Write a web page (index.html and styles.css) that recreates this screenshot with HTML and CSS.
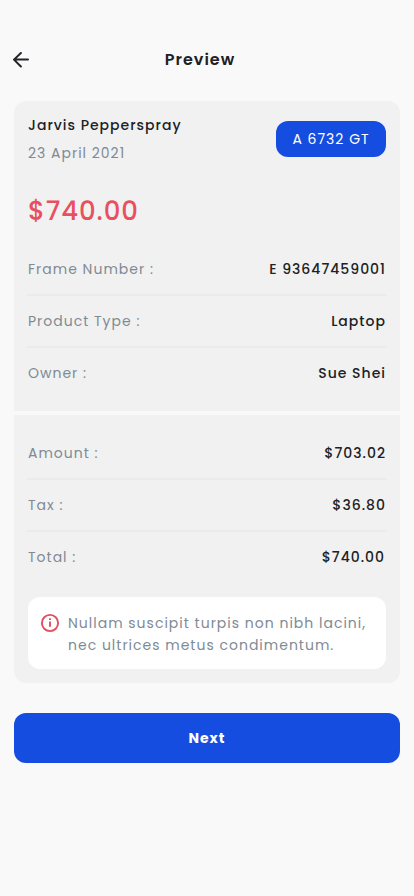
FILE: index.html
```html
<!DOCTYPE html>
<html lang="en">
<head>
<meta charset="utf-8">
<title>Preview</title>
<link rel="stylesheet" href="styles.css">
</head>
<body>
<main class="screen">
  <header class="topbar">
    <svg class="back" width="18" height="16" viewBox="0 0 18 16" fill="none" stroke="#232427" stroke-width="2" stroke-linecap="round" stroke-linejoin="round"><path d="M16 7.5H2.2M8.9 1 2 7.6 8.9 14.5"/></svg>
    <h1 class="title">Preview</h1>
  </header>
  <section class="card card-top">
    <div class="person">
      <div>
        <div class="name">Jarvis Pepperspray</div>
        <div class="date">23 April 2021</div>
      </div>
      <div class="plate">A 6732 GT</div>
    </div>
    <div class="price">$740.00</div>
    <dl class="rows">
      <div class="row"><dt>Frame Number :</dt><dd>E 93647459001</dd></div>
      <div class="row"><dt>Product Type :</dt><dd>Laptop</dd></div>
      <div class="row"><dt>Owner :</dt><dd>Sue Shei</dd></div>
    </dl>
  </section>
  <section class="card card-bottom">
    <dl class="rows">
      <div class="row"><dt>Amount :</dt><dd>$703.02</dd></div>
      <div class="row"><dt>Tax :</dt><dd>$36.80</dd></div>
      <div class="row"><dt>Total :</dt><dd class="total">$740.00</dd></div>
    </dl>
    <div class="note">
      <svg class="info" width="20" height="20" viewBox="0 0 20 20" fill="none" stroke="#e04f5f" stroke-width="1.9"><circle cx="10" cy="10" r="8.1"/><path d="M10 5.3v1.8M10 8.6v5.2"/></svg>
      <p class="note-text">Nullam suscipit turpis non nibh lacini,<br>nec ultrices metus condimentum.</p>
    </div>
  </section>
  <button class="next">Next</button>
</main>
</body>
</html>
```
FILE: styles.css
```css
* { box-sizing: border-box; margin: 0; }
body { background: #f9f9f9; color: #202124; font: 14px/22px Poppins, Lato, "Open Sans", sans-serif; letter-spacing: 1px; }
.screen { height: 896px; padding: 44px 14px 0; overflow: hidden; }
.topbar { height: 32px; display: grid; grid-template-columns: 18px 1fr 32px; align-items: center; margin: 0 -2px 25px; }
.title { font-size: 16px; font-weight: 600; line-height: 24px; text-align: center; }
.card { background: #f1f1f1; padding: 0 14px; }
.card-top { height: 310px; border-radius: 12px 12px 0 0; padding-top: 13px; }
.card-bottom { height: 268px; margin-top: 4px; border-radius: 0 0 12px 12px; padding-top: 13px; }
.person { display: flex; justify-content: space-between; }
.name { font-weight: 500; }
.date { margin-top: 6px; color: #808a94; }
.plate { width: 110px; height: 36px; margin-top: 7px; border-radius: 12px; background: #154de0; color: #fff; line-height: 36px; text-align: center; }
.price { margin-top: 28px; color: #e84f5f; font-size: 26px; font-weight: 500; line-height: 39px; letter-spacing: 0.9px; }
.rows { margin: 13px -1px 0; }
.card-bottom .rows { margin-top: 0; }
.row { display: flex; justify-content: space-between; align-items: center; height: 52px; padding: 0 1px; border-bottom: 2px solid #ebebeb; }
.row:last-child { border-color: transparent; }
dt { color: #808a94; }
dd { font-weight: 500; }
.total { margin-right: 1px; }
.note { display: flex; gap: 8px; height: 72px; margin-top: 13px; padding: 15px 12px; border-radius: 12px; background: #fff; color: #808a94; }
.info { margin-top: 1px; flex: none; }
.note-text { white-space: nowrap; }
.next { display: block; width: 100%; height: 50px; margin-top: 30px; border: 0; border-radius: 12px; background: #154de0; color: #fff; font: inherit; font-weight: 700; letter-spacing: 1px; }
```
